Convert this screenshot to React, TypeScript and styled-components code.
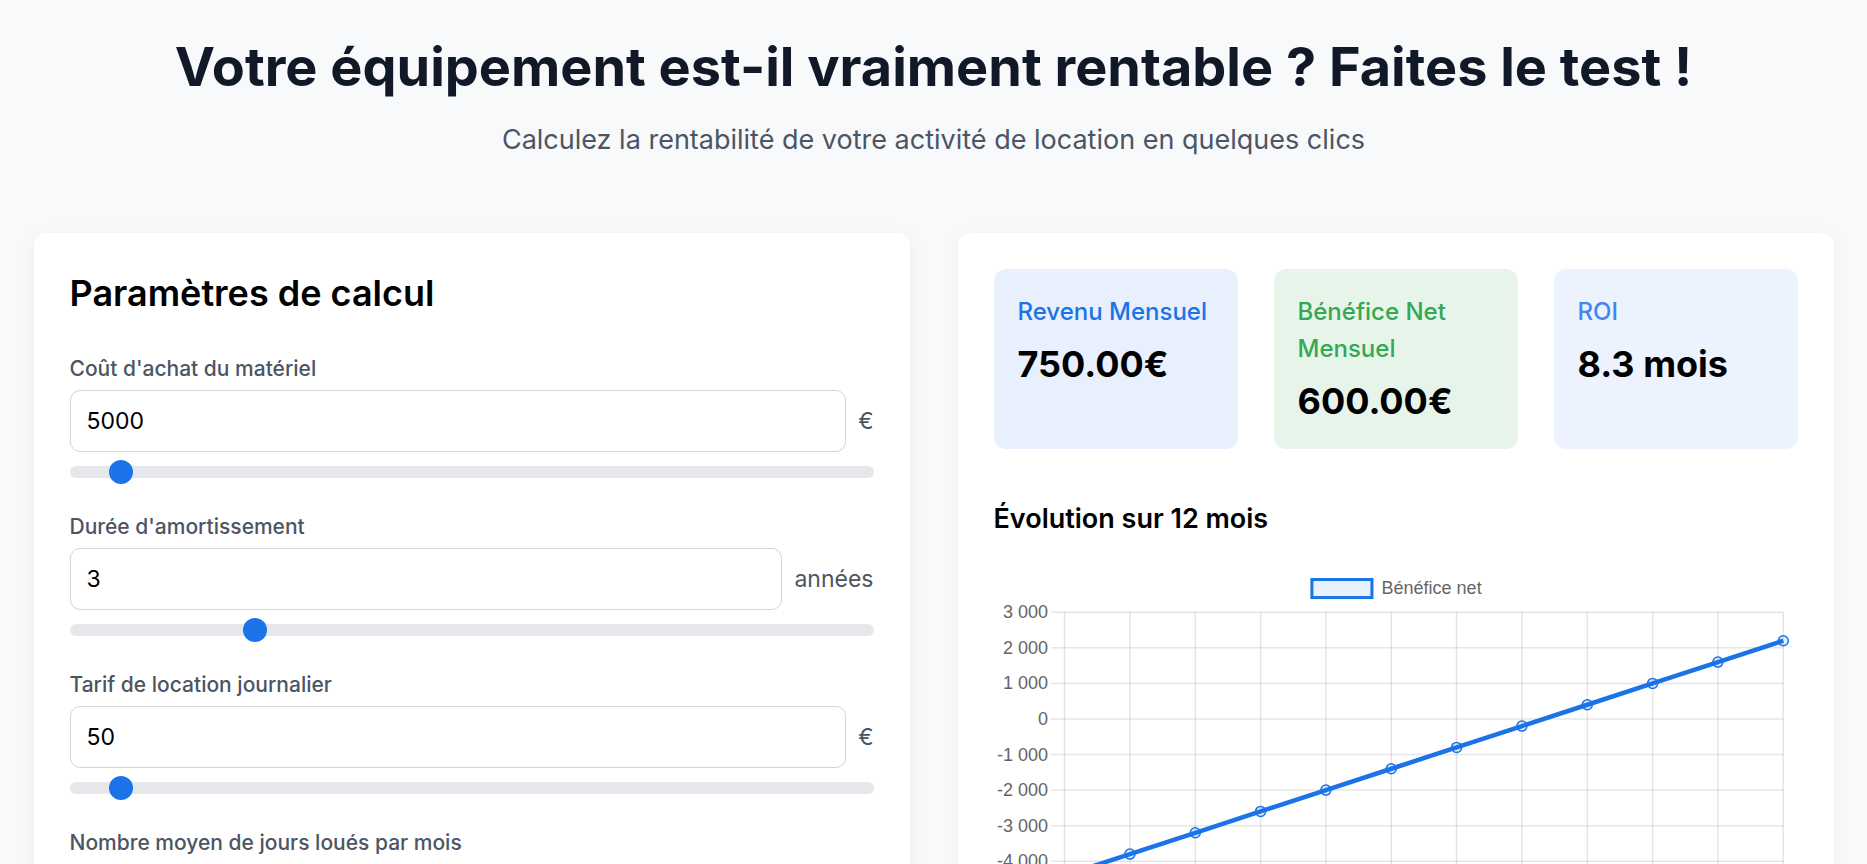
import React, { useState } from 'react';
import styled, { createGlobalStyle } from 'styled-components';

const GlobalStyle = createGlobalStyle`
  * { box-sizing: border-box; }
  body {
    margin: 0;
    background: #f8f9fb;
    font-family: Inter, "Noto Sans", sans-serif;
    color: #111827;
  }
`;

const Page = styled.div`
  max-width: 1800px;
  margin: 0 auto;
  padding: 34px 0 48px;
`;

const Header = styled.header`
  text-align: center;
  margin-bottom: 74px;
`;

const Title = styled.h1`
  margin: 0;
  font-size: 54px;
  line-height: 65px;
  font-weight: 700;
  color: #111827;
`;

const Subtitle = styled.p`
  margin: 22px 0 0;
  font-size: 27px;
  line-height: 38px;
  color: #4b5563;
`;

const Columns = styled.div`
  display: grid;
  grid-template-columns: 1fr 1fr;
  gap: 48px;
  align-items: start;
`;

const Card = styled.section`
  background: #ffffff;
  border-radius: 12px;
  padding: 36px;
  box-shadow: 0 4px 20px rgba(15, 23, 42, 0.05);
`;

const CardTitle = styled.h2`
  margin: 0 0 37px;
  font-size: 36px;
  line-height: 48px;
  font-weight: 600;
  color: #000;
`;

const Field = styled.div`
  margin-bottom: 34px;
`;

const FieldLabel = styled.label`
  display: block;
  margin-bottom: 6px;
  font-size: 21px;
  line-height: 30px;
  font-weight: 500;
  color: #4b5563;
`;

const InputRow = styled.div`
  display: flex;
  align-items: center;
  gap: 12px;
`;

const NumberInput = styled.input`
  flex: 1;
  min-width: 0;
  height: 62px;
  padding: 0 16px;
  border: 1px solid #d1d5db;
  border-radius: 10px;
  font-family: Inter, sans-serif;
  font-size: 23px;
  color: #000;
  background: #fff;
  outline: none;
`;

const Unit = styled.span`
  font-size: 23px;
  color: #4b5563;
`;

const Range = styled.input`
  -webkit-appearance: none;
  appearance: none;
  display: block;
  width: 100%;
  height: 12px;
  margin: 14px 0 0;
  background: #e5e7eb;
  border-radius: 6px;
  outline: none;
  &::-webkit-slider-thumb {
    -webkit-appearance: none;
    appearance: none;
    width: 24px;
    height: 24px;
    border-radius: 50%;
    border: none;
    background: #1a73e8;
    cursor: pointer;
  }
  &::-moz-range-thumb {
    width: 24px;
    height: 24px;
    border-radius: 50%;
    border: none;
    background: #1a73e8;
  }
`;

const StatsGrid = styled.div`
  display: grid;
  grid-template-columns: repeat(3, 1fr);
  gap: 36px;
`;

type Tone = 'blue' | 'green' | 'sky';

const toneBg: Record<Tone, string> = { blue: '#e8f0fe', green: '#e6f4ea', sky: '#ecf3fe' };
const toneFg: Record<Tone, string> = { blue: '#1a73e8', green: '#34a853', sky: '#4285f4' };

const StatBox = styled.div<{ $tone: Tone }>`
  background: ${(p) => toneBg[p.$tone]};
  border-radius: 12px;
  padding: 24px;
`;

const StatLabel = styled.h3<{ $tone: Tone }>`
  margin: 0;
  font-size: 24px;
  line-height: 37px;
  font-weight: 500;
  color: ${(p) => toneFg[p.$tone]};
`;

const StatValue = styled.p`
  margin: 10px 0 0;
  font-size: 36px;
  line-height: 48px;
  font-weight: 700;
  color: #000;
`;

const ChartTitle = styled.h3`
  margin: 53px 0 0;
  font-size: 27px;
  line-height: 34px;
  font-weight: 600;
  color: #000;
`;

const ChartWrap = styled.div`
  margin-top: 16px;
  width: 100%;
`;

const ChartSvg = styled.svg`
  display: block;
  width: 100%;
  height: auto;
  font-family: "Liberation Sans", Arial, sans-serif;
`;

const fmt = (n: number) => {
  const s = Math.abs(n).toString().replace(/\B(?=(\d{3})+(?!\d))/g, ' ');
  return (n < 0 ? '-' : '') + s;
};

function ProfitChart({ data }: { data: number[] }) {
  const W = 803;
  const H = 420;
  const left = 70.5;
  const right = 788.3;
  const top = 60.2;
  const pxPer = 35.52 / 1000;
  const maxT = Math.ceil(Math.max(...data) / 1000) * 1000;
  const minT = Math.floor(Math.min(...data) / 1000) * 1000;
  const ticks: number[] = [];
  for (let v = maxT; v >= minT; v -= 1000) ticks.push(v);
  const yOf = (v: number) => top + (maxT - v) * pxPer;
  const bottom = yOf(minT);
  const step = (right - left) / (data.length - 1);
  const xOf = (i: number) => left + i * step;
  const pts = data.map((v, i) => `${xOf(i)},${yOf(v)}`).join(' ');
  const grid = 'rgba(0,0,0,0.1)';

  return (
    <ChartSvg viewBox={`0 0 ${W} ${H}`}>
      <rect x={317.5} y={27.5} width={60} height={18} fill="rgba(26,115,232,0.1)" stroke="#1a73e8" strokeWidth={3} />
      <text x={387} y={42} fontSize={18} fill="#666">Bénéfice net</text>

      {ticks.map((t) => (
        <g key={t}>
          <line x1={57} x2={right} y1={yOf(t)} y2={yOf(t)} stroke={grid} strokeWidth={1.5} />
          <text x={54} y={yOf(t) + 6} fontSize={18} fill="#666" textAnchor="end">{fmt(t)}</text>
        </g>
      ))}
      {data.map((_, i) => (
        <g key={i}>
          <line x1={xOf(i)} x2={xOf(i)} y1={top} y2={bottom + 12} stroke={grid} strokeWidth={1.5} />
          <text x={xOf(i)} y={bottom + 34} fontSize={18} fill="#666" textAnchor="middle">{`Mois ${i + 1}`}</text>
        </g>
      ))}
      <polyline points={pts} fill="none" stroke="#1a73e8" strokeWidth={4.5} strokeLinejoin="round" />
      {data.map((v, i) => (
        <circle key={i} cx={xOf(i)} cy={yOf(v)} r={5} fill="rgba(26,115,232,0.1)" stroke="#1a73e8" strokeWidth={1.5} />
      ))}
    </ChartSvg>
  );
}

type FieldDef = {
  key: string;
  label: string;
  unit: string;
  min: number;
  max: number;
  step: number;
};

const fields: FieldDef[] = [
  { key: 'cost', label: "Coût d'achat du matériel", unit: '€', min: 0, max: 100000, step: 100 },
  { key: 'years', label: "Durée d'amortissement", unit: 'années', min: 1, max: 10, step: 1 },
  { key: 'rate', label: 'Tarif de location journalier', unit: '€', min: 0, max: 1000, step: 5 },
  { key: 'days', label: 'Nombre moyen de jours loués par mois', unit: 'jours', min: 0, max: 30, step: 1 },
  { key: 'fees', label: "Frais mensuels (entretien, assurance)", unit: '€', min: 0, max: 2000, step: 10 },
];

export default function App() {
  const [vals, setVals] = useState<Record<string, number>>({
    cost: 5000,
    years: 3,
    rate: 50,
    days: 15,
    fees: 150,
  });

  const set = (k: string, v: string) => setVals((s) => ({ ...s, [k]: Number(v) || 0 }));

  const revenue = vals.rate * vals.days;
  const net = revenue - vals.fees;
  const roi = net > 0 ? vals.cost / net : 0;
  const data = Array.from({ length: 12 }, (_, i) => -vals.cost + net * (i + 1));

  return (
    <>
      <GlobalStyle />
      <Page>
        <Header>
          <Title>Votre équipement est-il vraiment rentable ? Faites le test !</Title>
          <Subtitle>Calculez la rentabilité de votre activité de location en quelques clics</Subtitle>
        </Header>
        <Columns>
          <Card>
            <CardTitle>Paramètres de calcul</CardTitle>
            {fields.map((f) => (
              <Field key={f.key}>
                <FieldLabel htmlFor={f.key}>{f.label}</FieldLabel>
                <InputRow>
                  <NumberInput
                    id={f.key}
                    type="number"
                    value={vals[f.key]}
                    onChange={(e) => set(f.key, e.target.value)}
                  />
                  <Unit>{f.unit}</Unit>
                </InputRow>
                <Range
                  type="range"
                  min={f.min}
                  max={f.max}
                  step={f.step}
                  value={vals[f.key]}
                  onChange={(e) => set(f.key, e.target.value)}
                />
              </Field>
            ))}
          </Card>
          <Card>
            <StatsGrid>
              <StatBox $tone="blue">
                <StatLabel $tone="blue">Revenu Mensuel</StatLabel>
                <StatValue>{revenue.toFixed(2)}€</StatValue>
              </StatBox>
              <StatBox $tone="green">
                <StatLabel $tone="green">Bénéfice Net Mensuel</StatLabel>
                <StatValue>{net.toFixed(2)}€</StatValue>
              </StatBox>
              <StatBox $tone="sky">
                <StatLabel $tone="sky">ROI</StatLabel>
                <StatValue>{roi.toFixed(1)} mois</StatValue>
              </StatBox>
            </StatsGrid>
            <ChartTitle>Évolution sur 12 mois</ChartTitle>
            <ChartWrap>
              <ProfitChart data={data} />
            </ChartWrap>
          </Card>
        </Columns>
      </Page>
    </>
  );
}
